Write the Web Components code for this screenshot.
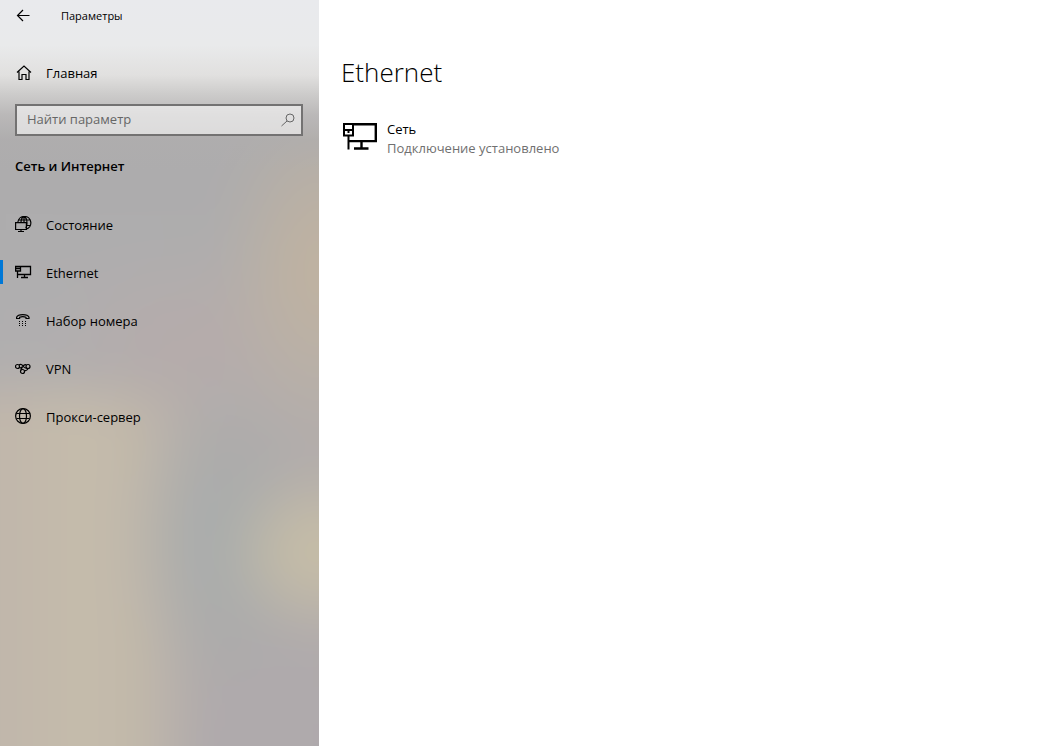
<!DOCTYPE html>
<html lang="ru">
<head>
<meta charset="utf-8">
<title>Параметры</title>
<style>
  html, body { margin: 0; min-height: 100%; background: #fff; }
  body { font-family: "Open Sans", "Noto Sans", sans-serif; font-size: 13px; line-height: 20px; color: #000; }
</style>
</head>
<body>
<settings-window>
  <settings-sidebar slot="sidebar" caption="Параметры">
    <nav-item slot="home" icon="home">Главная</nav-item>
    <search-box slot="search" label="Найти параметр"></search-box>
    <span slot="category">Сеть и Интернет</span>
    <nav-item icon="status">Состояние</nav-item>
    <nav-item icon="ethernet" selected>Ethernet</nav-item>
    <nav-item icon="dialup">Набор номера</nav-item>
    <nav-item icon="vpn">VPN</nav-item>
    <nav-item icon="globe">Прокси-сервер</nav-item>
  </settings-sidebar>
  <settings-page heading="Ethernet">
    <network-card status="Подключение установлено">Сеть</network-card>
  </settings-page>
</settings-window>

<script>
const icons = {
  back: '<path stroke-width="1.200" d="M14.500 8.500H2.500M8 3 2.500 8.500 8 14"/>',
  home: '<path stroke-width="1.200" d="M2 8.500 9 2l7 6.500M4 7.500V15.500H7V10.500H11V15.500H14V7.500"/>',
  search: '<circle cx="11" cy="7" r="4"/><path d="M8 10 2.500 15"/>',
  status: '<path stroke-width="1.200" d="M2.900 6A6.500 6.500 0 1 1 11 13.200M6 6C6.200 3.500 7.400 1 9 .6c1.800.6 3 3.400 3 6.400 0 2-.4 3.800-1.200 5M3.500 4h11M11 9.500h4M9 .5V6"/><path stroke-width="1.200" d="M.6 6.600h10.800v6.900H.6zM6 13.500v2.500M3 15.500h6"/>',
  ethernet: '<path stroke-width="1.300" d="M5 2.500h10.500v8H2.500M9.500 10.500v3M6 13.500h7M.6 2.500h4.900v4.500H.6zM.6 4.500h4.900M2.500 7v7"/>',
  dialup: '<path stroke-width="1.200" d="M1.600 6.500V5.200C2.500 3 5 2.600 7.800 2.600s5.300.4 6.200 2.600v1.300h-3V5.300c-1.500-.7-4.900-.7-6.400 0v1.200z"/><g fill="currentColor" stroke="none"><path d="M4 9h1v1H4zM7 9h1v1H7zM10 9h1v1h-1zM4 11h1v1H4zM7 11h1v1H7zM10 11h1v1h-1zM4 13h1v1H4zM7 13h1v1H7zM10 13h1v1h-1z"/></g>',
  vpn: '<g stroke-width="1.200"><circle cx="2.500" cy="6.500" r="2"/><circle cx="13" cy="6.500" r="2"/><circle cx="7.500" cy="11.500" r="2"/><path d="M4 5c1.700-1.300 3-.4 4 1s2 2.500 3.800 2M11.500 5C9.500 3.800 8.500 5.500 7.500 7S6 9 5.800 10.500M4.500 7.500c1 .6 1.700.3 2.500-.5M13 8.500c-.3 1.500-1.600 2-3.500 2.300"/></g>',
  globe: '<g stroke-width="1.200"><circle cx="8" cy="8" r="7.400"/><ellipse cx="8" cy="8" rx="3.500" ry="7.400"/><path d="M1.500 5.500h13M1.500 10.500h13"/></g>',
  network: '<path stroke-width="2.400" d="M10 2.200h22.800v16.900H5M18.500 19v7M11 26.500h14.500"/><path stroke-width="2" d="M1 2h9v11.500H1zM1 8h9M5.500 8v3M5.500 13v14.500"/>'
};
const draw = (name, size = 18) =>
  `<svg viewBox="0 0 ${size} ${size}" width="${size}" height="${size}" fill="none" stroke="currentColor" aria-hidden="true">${icons[name]}</svg>`;

class Base extends HTMLElement {
  connectedCallback() {
    if (!this.shadowRoot) this.attachShadow({ mode: 'open' }).innerHTML = this.render();
  }
}

customElements.define('settings-window', class extends Base {
  render() {
    return `<style>
      :host { display: grid; grid-template-columns: 319px minmax(0, 1fr); min-height: 100vh; }
    </style><slot name="sidebar"></slot><slot></slot>`;
  }
});

customElements.define('settings-sidebar', class extends Base {
  render() {
    return `<style>
      :host {
        display: block; box-sizing: border-box;
        position: relative; isolation: isolate; overflow: hidden;
      }
      /* Frosted backdrop: soft patches of colour, blurred together */
      .backdrop { position: absolute; inset: -60px; z-index: -1; filter: blur(24px);
        background:
          radial-gradient(110px 180px at 385px 330px, #bfb2a1 20%, #bfb2a100) no-repeat,
          radial-gradient(100px 90px at 379px 612px, #c6bda7 25%, #c6bda700) no-repeat,
          radial-gradient(100px 160px at 285px 600px, #a8acac 15%, #a8acac00) no-repeat,
          radial-gradient(150px 100px at 250px 400px, #b6abaa, #b6abaa00) no-repeat,
          linear-gradient(90deg, #c0b6ab 60px, #c5bcab 140px, #c1b8aa 205px, #c1b8aa00 260px) 0 450px no-repeat,
          linear-gradient(#adacad 260px, #b0afb0 400px, #b2acab 500px, #aea9ac 100%);
      }
      .glow { position: absolute; inset: 0 0 auto; height: 170px; z-index: -1;
        background: linear-gradient(#e9eaed, #e9eaeb 45px, #e1e0df 75px, #cfcecdee 94px, #bcbabad9 115px, #b0aeae80 140px, #adabac00);
      }
      header { display: flex; align-items: center; height: 32px; padding-left: 15px; gap: 28px; font-size: 11px; }
      h1 { margin: 0; font: inherit; }
      button { display: flex; padding: 0; border: 0; background: none; color: inherit; }
      .home { margin-top: 17px; }
      .search { padding: 7px 16px 0 15px; }
      h2 { margin: 20px 0 25px 15px; font-size: 13px; font-weight: 600; line-height: 20px; }
      nav { display: block; }
    </style>
    <div class="backdrop"></div><div class="glow"></div>
    <header><button aria-label="Назад">${draw('back')}</button><h1>${this.getAttribute('caption')}</h1></header>
    <div class="home"><slot name="home"></slot></div>
    <div class="search"><slot name="search"></slot></div>
    <h2><slot name="category"></slot></h2>
    <nav><slot></slot></nav>`;
  }
});

customElements.define('nav-item', class extends Base {
  render() {
    return `<style>
      :host { display: block; }
      a { display: flex; align-items: center; gap: 13px; height: 48px; padding-left: 15px; color: inherit; text-decoration: none; box-sizing: border-box; }
      :host([selected]) a { background: linear-gradient(#0078d7, #0078d7) 0 11px / 3px 24px no-repeat; }
    </style><a href="#"${this.hasAttribute('selected') ? ' aria-current="page"' : ''}>${draw(this.getAttribute('icon'))}<slot></slot></a>`;
  }
});

customElements.define('search-box', class extends Base {
  render() {
    return `<style>
      :host { display: block; }
      label { display: flex; align-items: center; box-sizing: border-box; height: 32px; padding: 0 4px 0 10px; border: 2px solid #737272; background: rgba(255,255,255,.55); color: #666; }
      input { flex: 1; min-width: 0; padding: 0 0 2px; border: 0; outline: 0; background: none; font: inherit; color: #111; }
      input::placeholder { color: #666; opacity: 1; }
    </style><label><input type="text" aria-label="${this.getAttribute('label')}" placeholder="${this.getAttribute('label')}">${draw('search')}</label>`;
  }
});

customElements.define('settings-page', class extends Base {
  render() {
    return `<style>
      :host { display: block; padding: 52px 22px 0; background: #fff; }
      h1 { margin: 0 0 28px; font-size: 26px; font-weight: 300; line-height: 40px; color: #000; }
    </style><main><h1>${this.getAttribute('heading')}</h1><slot></slot></main>`;
  }
});

customElements.define('network-card', class extends Base {
  render() {
    return `<style>
      :host { display: block; }
      a { display: flex; gap: 9px; padding-left: 2px; color: #000; text-decoration: none; }
      svg { margin-top: 2px; }
      div { line-height: 19px; }
      small { display: block; font-size: 13px; color: #707070; }
    </style><a href="#">${draw('network', 35)}<div><slot></slot><small>${this.getAttribute('status')}</small></div></a>`;
  }
});
</script>
</body>
</html>
